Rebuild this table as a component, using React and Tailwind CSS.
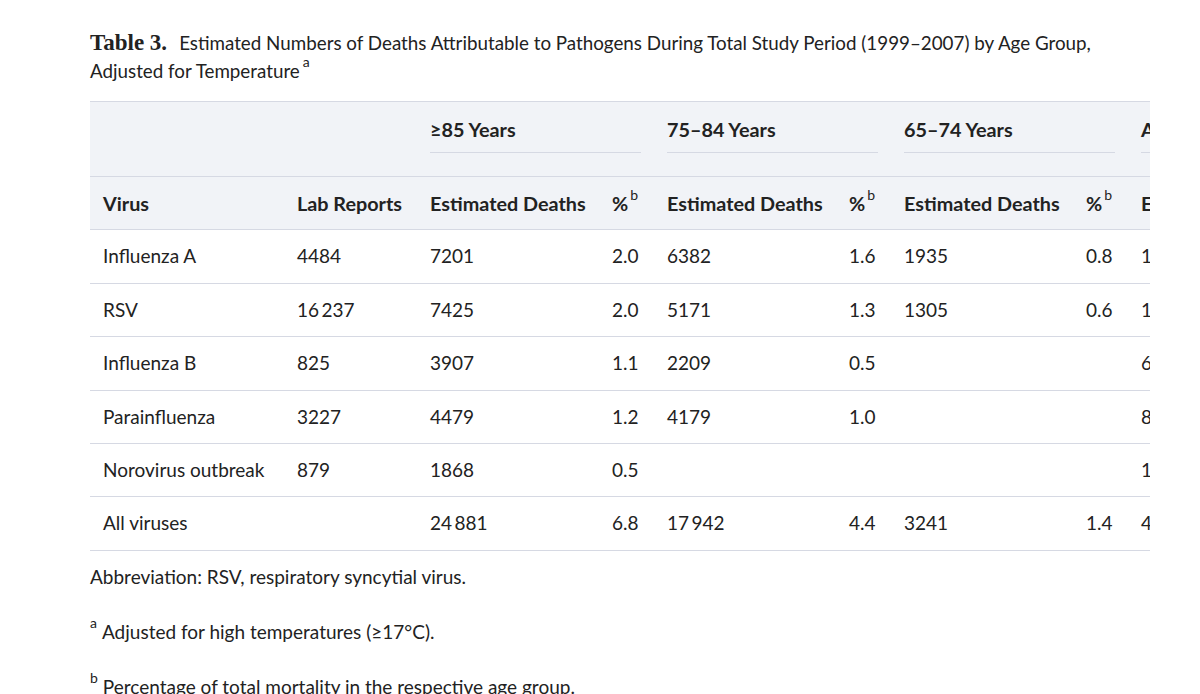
import React from "react";

const rows = [
  ["Influenza A", "4484", "7201", "2.0", "6382", "1.6", "1935", "0.8", "1"],
  ["RSV", "16\u2009237", "7425", "2.0", "5171", "1.3", "1305", "0.6", "1"],
  ["Influenza B", "825", "3907", "1.1", "2209", "0.5", "", "", "6"],
  ["Parainfluenza", "3227", "4479", "1.2", "4179", "1.0", "", "", "8"],
  ["Norovirus outbreak", "879", "1868", "0.5", "", "", "", "", "1"],
  ["All viruses", "", "24\u2009881", "6.8", "17\u2009942", "4.4", "3241", "1.4", "4"],
];

const groups = ["\u226585 Years", "75\u201384 Years", "65\u201374 Years", "All Ages"];

function Sup({ children }) {
  return (
    <span className="relative -top-[11px] text-[14px] leading-none font-normal ml-[2px]">
      {children}
    </span>
  );
}

export default function App() {
  return (
    <div className="w-[1200px] h-[694px] overflow-hidden bg-white text-[#222] [font-family:Lato,sans-serif] pl-[90px] pt-[29px]">
      <div className="w-[1060px] text-[18.8px] leading-[28px] whitespace-nowrap">
        <span className="[font-family:'Liberation_Serif',serif] font-bold text-[23px] leading-none mr-[12px]">Table 3.</span>
        Estimated Numbers of Deaths Attributable to Pathogens During Total Study Period (1999–2007) by Age Group,
        <br />
        Adjusted for Temperature
        <span className="relative -top-[11px] text-[14px] leading-none ml-[3px]">a</span>
      </div>

      <div className="w-[1060px] overflow-hidden mt-[16px]">
        <table className="table-fixed border-collapse w-[1275px] text-[19px] leading-[26.4px] text-left">
          <colgroup>
            <col className="w-[194px]" />
            <col className="w-[133px]" />
            <col className="w-[182px]" />
            <col className="w-[55px]" />
            <col className="w-[182px]" />
            <col className="w-[55px]" />
            <col className="w-[182px]" />
            <col className="w-[55px]" />
            <col className="w-[182px]" />
            <col className="w-[55px]" />
          </colgroup>
          <thead className="bg-[#f1f3f7] text-[19.8px]">
            <tr className="border-t border-[#d6d9e3]">
              <th className="px-[13px]" />
              <th className="px-[13px]" />
              {groups.map((g) => (
                <th key={g} colSpan={2} className="px-[13px] pt-[14px] pb-[23px] font-bold whitespace-nowrap">
                  <div className="pb-[10px] border-b border-[#d6d9e3] leading-[26px]">{g}</div>
                </th>
              ))}
            </tr>
            <tr className="border-t border-b border-[#d6d9e3]">
              <th className="px-[13px] py-[13px] font-bold whitespace-nowrap">Virus</th>
              <th className="px-[13px] py-[13px] font-bold whitespace-nowrap">Lab Reports</th>
              {groups.map((g) => (
                <React.Fragment key={g}>
                  <th className="px-[13px] py-[13px] font-bold whitespace-nowrap">Estimated Deaths</th>
                  <th className="px-[13px] py-[13px] font-bold whitespace-nowrap">
                    %<Sup>b</Sup>
                  </th>
                </React.Fragment>
              ))}
            </tr>
          </thead>
          <tbody>
            {rows.map((r) => (
              <tr key={r[0]} className="border-b border-[#d6d9e3]">
                {r.map((c, i) => (
                  <td key={i} className="px-[13px] py-[13px] whitespace-nowrap">
                    {c}
                  </td>
                ))}
                <td className="px-[13px] py-[13px]" />
              </tr>
            ))}
          </tbody>
        </table>
      </div>

      <div className="text-[19px] leading-[26px] mt-[13px]">
        <p>Abbreviation: RSV, respiratory syncytial virus.</p>
        <p className="mt-[29px]">
          <span className="relative -top-[11px] text-[14px] leading-none mr-[5px]">a</span>
          Adjusted for high temperatures (≥17°C).
        </p>
        <p className="mt-[29px]">
          <span className="relative -top-[11px] text-[14px] leading-none mr-[5px]">b</span>
          Percentage of total mortality in the respective age group.
        </p>
      </div>
    </div>
  );
}
